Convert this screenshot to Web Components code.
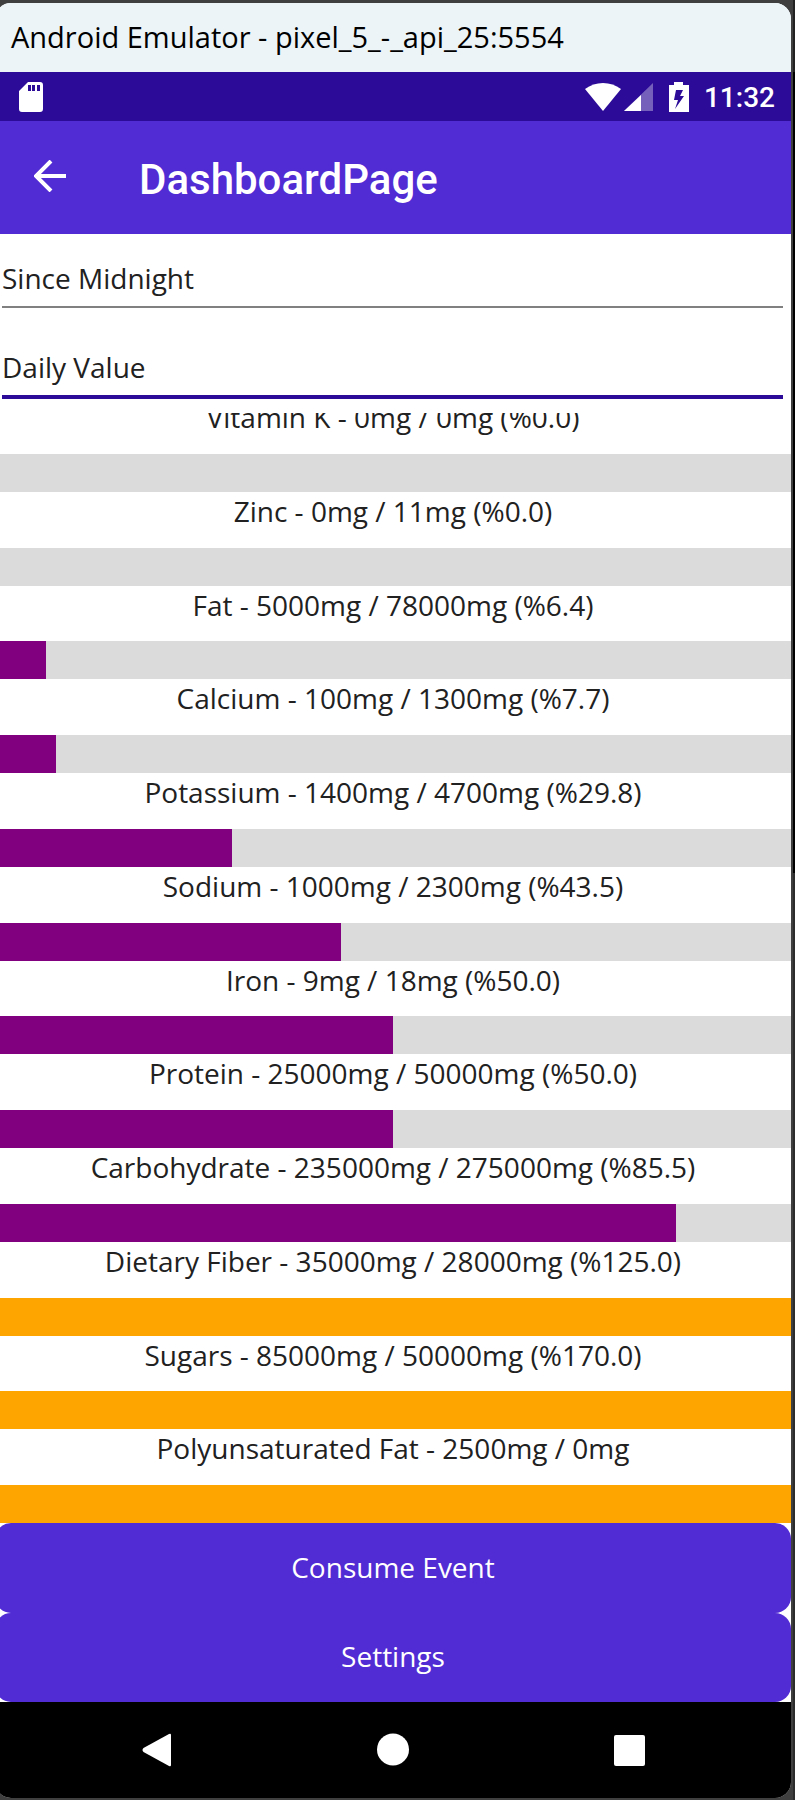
<!DOCTYPE html>
<html lang="en">
<head>
<meta charset="utf-8">
<meta name="viewport" content="width=device-width, initial-scale=1">
<title>Android Emulator - pixel_5_-_api_25:5554</title>
<style>
  html, body { margin: 0; height: 100%; }
  body { overflow: hidden; background: #3c3c3c; font-family: "Open Sans", "Noto Sans", sans-serif; color: #212121; }
</style>
</head>
<body>
<emulator-window caption="Android Emulator - pixel_5_-_api_25:5554">
  <status-bar time="11:32"></status-bar>
  <app-bar>DashboardPage</app-bar>
  <picker-form>
    <picker-field label="Period" value="Since Midnight"></picker-field>
    <picker-field label="Target" value="Daily Value" active></picker-field>
  </picker-form>
  <nutrient-list>
    <nutrient-row percent="0">Vitamin K - 0mg / 0mg (%0.0)</nutrient-row>
    <nutrient-row percent="0">Zinc - 0mg / 11mg (%0.0)</nutrient-row>
    <nutrient-row percent="6.4">Fat - 5000mg / 78000mg (%6.4)</nutrient-row>
    <nutrient-row percent="7.7">Calcium - 100mg / 1300mg (%7.7)</nutrient-row>
    <nutrient-row percent="29.8">Potassium - 1400mg / 4700mg (%29.8)</nutrient-row>
    <nutrient-row percent="43.5">Sodium - 1000mg / 2300mg (%43.5)</nutrient-row>
    <nutrient-row percent="50">Iron - 9mg / 18mg (%50.0)</nutrient-row>
    <nutrient-row percent="50">Protein - 25000mg / 50000mg (%50.0)</nutrient-row>
    <nutrient-row percent="85.5">Carbohydrate - 235000mg / 275000mg (%85.5)</nutrient-row>
    <nutrient-row percent="125">Dietary Fiber - 35000mg / 28000mg (%125.0)</nutrient-row>
    <nutrient-row percent="170">Sugars - 85000mg / 50000mg (%170.0)</nutrient-row>
    <nutrient-row percent="101">Polyunsaturated Fat - 2500mg / 0mg</nutrient-row>
  </nutrient-list>
  <action-stack>
    <action-button>Consume Event</action-button>
    <action-button>Settings</action-button>
  </action-stack>
  <navigation-bar></navigation-bar>
</emulator-window>

<script>
class BaseElement extends HTMLElement {
  connectedCallback() {
    if (this.shadowRoot) return;
    const t = document.createElement('template');
    t.innerHTML = '<style>*{box-sizing:border-box}:host{display:block;box-sizing:border-box}</style>' + this.render();
    this.attachShadow({ mode: 'open' }).append(t.content.cloneNode(true));
  }
}

customElements.define('emulator-window', class extends BaseElement {
  render() {
    return `<style>
      :host { height: 100vh; padding: 3px 4px 2px 0;
        background: linear-gradient(#222 4%, #000 4% 48.5%, #2c2c2c 48.5%) right / 2px 100% no-repeat, #3f3f3f; }
      .window { display: flex; flex-direction: column; height: 100%; margin-left: -5px;
        background: #fff; border-radius: 16px; overflow: hidden; }
      header { flex: none; height: 69px; padding: 0 16px 2px; background: #ecf4f8; color: #000;
        display: flex; align-items: center; }
      h1 { margin: 0; font-size: 29px; line-height: 40px; font-weight: 400; white-space: nowrap; }
    </style>
    <div class="window">
      <header><h1>${this.getAttribute('caption')}</h1></header>
      <slot></slot>
    </div>`;
  }
});

customElements.define('status-bar', class extends BaseElement {
  render() {
    return `<style>
      :host { flex: none; height: 49px; padding: 0 16px 0 24px; background: #2b0b98; color: #fff;
        display: flex; align-items: center; font: 500 28px/32px Roboto, sans-serif; }
      svg { display: block; flex: none; }
      .right { margin-left: auto; display: flex; align-items: center; }
      .signal { margin: 0 16px 0 3px; }
      time { margin-left: 15px; padding-top: 2px; }
    </style>
    <svg width="24" height="30" viewBox="0 0 24 30" role="img" aria-label="SD card">
      <path fill="#fff" fill-rule="evenodd" d="M9 0H21a3 3 0 0 1 3 3V27a3 3 0 0 1-3 3H3a3 3 0 0 1-3-3V9ZM9 3V9H12V3ZM13 3V9H16V3ZM18 3V9H21V3Z"/>
    </svg>
    <div class="right">
      <svg width="36" height="30" viewBox="0 0 36 30" role="img" aria-label="Wi-Fi">
        <path fill="#fff" d="M18 29 0 7Q8 1 18 1T36 7Z"/>
      </svg>
      <svg class="signal" width="29" height="30" viewBox="0 0 29 30" role="img" aria-label="Signal">
        <path fill="#fff" fill-opacity=".35" d="M29 1V29H0Z"/><path fill="#fff" d="M17 13V29H0Z"/>
      </svg>
      <svg width="20" height="30" viewBox="0 0 20 30" role="img" aria-label="Battery charging">
        <path fill="#fff" fill-rule="evenodd" d="M5 0H14V3H20V30H0V3H5ZM7 8 5 18H9L6 27 15 14H11L14 8Z"/>
      </svg>
      <time>${this.getAttribute('time')}</time>
    </div>`;
  }
});

customElements.define('app-bar', class extends BaseElement {
  render() {
    return `<style>
      :host { flex: none; height: 113px; padding-left: 39px; background: #512bd4; color: #fff;
        display: flex; align-items: center; }
      button { padding: 0 0 4px; border: 0; background: none; color: inherit; }
      svg { display: block; }
      h2 { margin: 4px 0 0 73px; font: 500 42px/48px Roboto, sans-serif; }
    </style>
    <button type="button" aria-label="Back">
      <svg width="32" height="32" viewBox="0 0 32 32"><path d="M32 16H3M17 1 2 16 17 31" fill="none" stroke="currentColor" stroke-width="4"/></svg>
    </button>
    <h2><slot></slot></h2>`;
  }
});

customElements.define('picker-form', class extends BaseElement {
  render() {
    return `<style>
      :host { flex: none; height: 179px; padding: 0 8px 0 7px; display: grid; grid-template-rows: 1fr 1fr; }
    </style><slot></slot>`;
  }
});

customElements.define('picker-field', class extends BaseElement {
  render() {
    return `<style>
      :host { padding-bottom: 16px; display: flex; }
      input { width: 100%; border: 0; border-bottom: 2px solid #808080; border-radius: 0; outline: 0;
        padding: 22px 0 6px; background: none; color: inherit; font: 28px/38px "Open Sans", sans-serif; }
      :host([active]) { padding-bottom: 14px; }
      :host([active]) input { border-bottom: 4px solid #2b0b98; }
    </style>
    <input type="text" readonly aria-label="${this.getAttribute('label')}" value="${this.getAttribute('value')}">`;
  }
});

customElements.define('nutrient-list', class extends BaseElement {
  render() {
    return `<style>
      :host { flex: 1; min-height: 0; overflow: hidden; display: flex; flex-direction: column; justify-content: flex-end; }
      .rows { flex: none; height: calc(100% + 15px); display: grid; grid-auto-rows: 1fr; }
    </style><div class="rows"><slot></slot></div>`;
  }
});

customElements.define('nutrient-row', class extends BaseElement {
  render() {
    const percent = Number(this.getAttribute('percent'));
    const over = percent > 100;
    return `<style>
      :host { display: flex; flex-direction: column; text-align: center; font-size: 28px; line-height: 38px; }
      .label { flex: 1; }
      .track { flex: none; height: 38px; background: #dbdbdb; }
      .fill { height: 100%; width: ${Math.min(percent, 100)}%; background: ${over ? '#ffa500' : '#800080'}; }
    </style>
    <div class="label"><slot></slot></div>
    <div class="track"><div class="fill"></div></div>`;
  }
});

customElements.define('action-stack', class extends BaseElement {
  render() {
    return `<style>
      :host { flex: none; height: 179px; display: grid; grid-template-rows: 1fr 1fr; }
    </style><slot></slot>`;
  }
});

customElements.define('action-button', class extends BaseElement {
  render() {
    return `<style>
      button { display: block; width: 100%; height: 100%; padding: 0 0 2px; border: 0; border-radius: 16px;
        background: #512bd4; color: #fff; font: 28px/38px "Open Sans", sans-serif; }
    </style><button type="button"><slot></slot></button>`;
  }
});

customElements.define('navigation-bar', class extends BaseElement {
  render() {
    return `<style>
      :host { flex: none; height: 96px; background: #000; display: flex; justify-content: center; align-items: center; gap: 203px; }
      button { width: 33px; height: 34px; padding: 0; border: 0; background: none; color: #fff; }
      svg { display: block; }
    </style>
    <button type="button" aria-label="Back"><svg width="33" height="34" viewBox="0 0 33 34"><path fill="currentColor" d="M28 1q2-1 2 1V32q0 2-2 1L2.500 19q-2-2 0-4Z"/></svg></button>
    <button type="button" aria-label="Home"><svg width="33" height="34" viewBox="0 0 33 34"><circle cx="16" cy="16.500" r="16" fill="currentColor"/></svg></button>
    <button type="button" aria-label="Overview"><svg width="33" height="34" viewBox="0 0 33 34"><rect x="1" y="2" width="31" height="31" rx="2" fill="currentColor"/></svg></button>`;
  }
});
</script>
</body>
</html>
